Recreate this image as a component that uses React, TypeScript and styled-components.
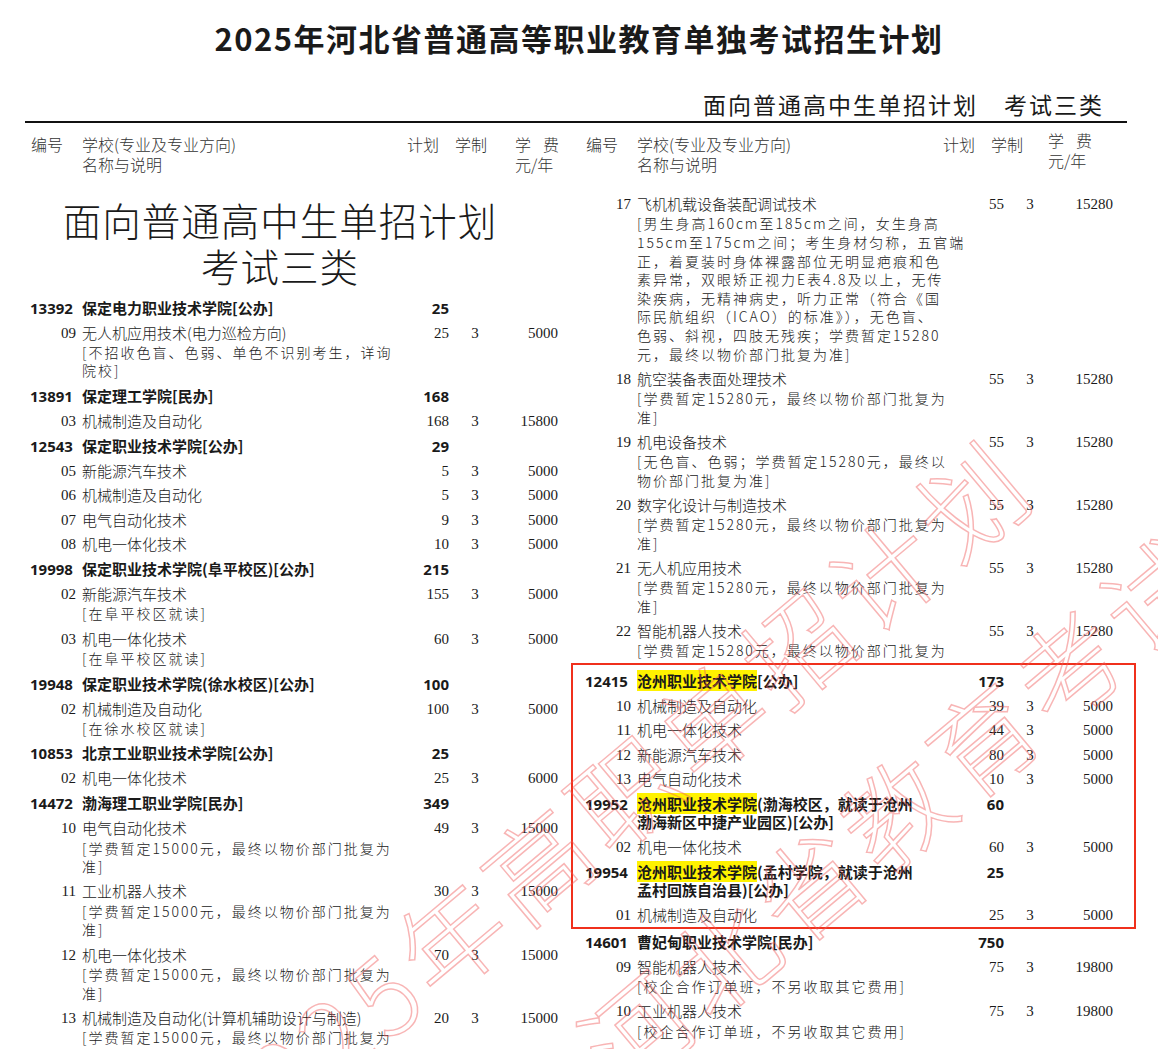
import React from "react";
import styled, { createGlobalStyle } from "styled-components";

const Global = createGlobalStyle`
  html, body { margin: 0; padding: 0; background: #fff; }
  body { width: 1158px; height: 1049px; overflow: hidden; font-family: "Noto Sans CJK SC", "Noto Sans", sans-serif; color: #1a1a1a; }
`;

const Page = styled.div`
  position: relative;
  width: 1158px;
  height: 1049px;
  overflow: hidden;
`;
const Title = styled.h1`
  margin: 0;
  padding-top: 16px;
  height: 44px;
  text-align: center;
  font-size: 31px;
  font-weight: 700;
  line-height: 44px;
  letter-spacing: 1.5px;
`;
const Sub = styled.div`
  margin: 28px 54px 0 0;
  text-align: right;
  font-size: 23px;
  line-height: 32px;
  letter-spacing: 2px;
  span { margin-left: 26px; }
`;
const Rule = styled.div`
  margin: 1px 31px 0 25px;
  height: 2px;
  background: #111;
`;
const Columns = styled.div`
  display: grid;
  grid-template-columns: 555px 552px;
  margin-left: 25px;
`;
const Col = styled.div``;
const Head = styled.div<{ $right?: boolean }>`
  display: grid;
  grid-template-columns: ${p => (p.$right ? "57px 306px 48px 57px 60px" : "57px 325px 48px 60px 60px")};
  padding-top: 11px;
  height: 58px;
  font-size: 16px;
  font-weight: 300;
  line-height: 20px;
  color: #333;
  white-space: nowrap;
  & > div:first-child { padding-left: 6px; }
`;
const FeeHead = styled.div<{ $up?: boolean }>`
  margin-top: ${p => (p.$up ? "-4px" : "0")};
  b { font-weight: 300; margin-right: 12px; }
`;
const BigHead = styled.div`
  text-align: center;
  font-size: 38.5px;
  font-weight: 300;
  line-height: 46px;
  padding: 4px 45px 0 0;
  height: 99px;
  letter-spacing: 1px;
  white-space: nowrap;
`;
const grid = `
  display: grid;
  grid-template-columns: 57px 318px 49px 52px 57px;
`;
const SchoolRow = styled.div`
  ${grid}
  font-weight: 700;
  font-size: 15px;
  line-height: 18px;
  padding: 3.5px 0 4px;
  & > .c { padding-left: 5px; font-family: "Noto Sans", sans-serif; }
  & > .p { text-align: right; font-family: "Noto Sans", sans-serif; }
`;
const Hl = styled.mark`
  background: #fff200;
  color: inherit;
`;
const ItemRow = styled.div`
  ${grid}
  height: 24.4px;
  line-height: 24px;
  font-size: 15px;
  font-weight: 300;
  & > .c { text-align: right; padding-right: 6px; font-family: "Liberation Serif", serif; font-size: 15px; }
  & > .p, & > .f { text-align: right; font-family: "Liberation Serif", serif; }
  & > .y { text-align: center; font-family: "Liberation Serif", serif; }
  & > .n { white-space: nowrap; }
`;
const Note = styled.div`
  padding-left: 57px;
  font-size: 14px;
  line-height: 18.6px;
  letter-spacing: 2px;
  font-weight: 300;
  color: #222;
  white-space: nowrap;
  margin-top: -2px;
  margin-bottom: 3.5px;
`;
const RedBox = styled.div`
  border: 2px solid #f0301c;
  margin: 0 -4px 0 -9px;
  padding: 3px 4px 0 7px;
`;
const Watermark = styled.div`
  position: absolute;
  pointer-events: none;
  left: 150px;
  top: 1060px;
  transform: rotate(-40deg);
  transform-origin: left top;
  font-size: 105px;
  font-weight: 300;
  color: transparent;
  -webkit-text-stroke: 1.5px rgba(240, 90, 90, 0.45);
  white-space: nowrap;
  line-height: 190px;
  letter-spacing: 8px;
`;

type R =
  | { t: "s"; c: string; n: React.ReactNode; p: string }
  | { t: "i"; c: string; n: string; p: string; y?: string; f: string }
  | { t: "n"; l: string[] }
  | { t: "box"; rows: R[] };

const render = (rows: R[]) =>
  rows.map((r, i) => {
    if (r.t === "s")
      return (
        <SchoolRow key={i}>
          <div className="c">{r.c}</div>
          <div>{r.n}</div>
          <div className="p">{r.p}</div>
        </SchoolRow>
      );
    if (r.t === "i")
      return (
        <ItemRow key={i}>
          <div className="c">{r.c}</div>
          <div className="n">{r.n}</div>
          <div className="p">{r.p}</div>
          <div className="y">{r.y ?? "3"}</div>
          <div className="f">{r.f}</div>
        </ItemRow>
      );
    if (r.t === "n")
      return (
        <Note key={i}>
          {r.l.map((s, j) => (
            <div key={j}>{s}</div>
          ))}
        </Note>
      );
    return <RedBox key={i}>{render(r.rows)}</RedBox>;
  });

const fee15 = ["[学费暂定15000元，最终以物价部门批复为", "准]"];
const fee1528 = ["[学费暂定15280元，最终以物价部门批复为", "准]"];

const left: R[] = [
  { t: "s", c: "13392", n: "保定电力职业技术学院[公办]", p: "25" },
  { t: "i", c: "09", n: "无人机应用技术(电力巡检方向)", p: "25", f: "5000" },
  { t: "n", l: ["[不招收色盲、色弱、单色不识别考生，详询", "院校]"] },
  { t: "s", c: "13891", n: "保定理工学院[民办]", p: "168" },
  { t: "i", c: "03", n: "机械制造及自动化", p: "168", f: "15800" },
  { t: "s", c: "12543", n: "保定职业技术学院[公办]", p: "29" },
  { t: "i", c: "05", n: "新能源汽车技术", p: "5", f: "5000" },
  { t: "i", c: "06", n: "机械制造及自动化", p: "5", f: "5000" },
  { t: "i", c: "07", n: "电气自动化技术", p: "9", f: "5000" },
  { t: "i", c: "08", n: "机电一体化技术", p: "10", f: "5000" },
  { t: "s", c: "19998", n: "保定职业技术学院(阜平校区)[公办]", p: "215" },
  { t: "i", c: "02", n: "新能源汽车技术", p: "155", f: "5000" },
  { t: "n", l: ["[在阜平校区就读]"] },
  { t: "i", c: "03", n: "机电一体化技术", p: "60", f: "5000" },
  { t: "n", l: ["[在阜平校区就读]"] },
  { t: "s", c: "19948", n: "保定职业技术学院(徐水校区)[公办]", p: "100" },
  { t: "i", c: "02", n: "机械制造及自动化", p: "100", f: "5000" },
  { t: "n", l: ["[在徐水校区就读]"] },
  { t: "s", c: "10853", n: "北京工业职业技术学院[公办]", p: "25" },
  { t: "i", c: "02", n: "机电一体化技术", p: "25", f: "6000" },
  { t: "s", c: "14472", n: "渤海理工职业学院[民办]", p: "349" },
  { t: "i", c: "10", n: "电气自动化技术", p: "49", f: "15000" },
  { t: "n", l: fee15 },
  { t: "i", c: "11", n: "工业机器人技术", p: "30", f: "15000" },
  { t: "n", l: fee15 },
  { t: "i", c: "12", n: "机电一体化技术", p: "70", f: "15000" },
  { t: "n", l: fee15 },
  { t: "i", c: "13", n: "机械制造及自动化(计算机辅助设计与制造)", p: "20", f: "15000" },
  { t: "n", l: fee15 },
];

const right: R[] = [
  { t: "i", c: "17", n: "飞机机载设备装配调试技术", p: "55", f: "15280" },
  {
    t: "n",
    l: [
      "[男生身高160cm至185cm之间，女生身高",
      "155cm至175cm之间；考生身材匀称，五官端",
      "正，着夏装时身体裸露部位无明显疤痕和色",
      "素异常，双眼矫正视力E表4.8及以上，无传",
      "染疾病，无精神病史，听力正常（符合《国",
      "际民航组织（ICAO）的标准》），无色盲、",
      "色弱、斜视，四肢无残疾；学费暂定15280",
      "元，最终以物价部门批复为准]",
    ],
  },
  { t: "i", c: "18", n: "航空装备表面处理技术", p: "55", f: "15280" },
  { t: "n", l: fee1528 },
  { t: "i", c: "19", n: "机电设备技术", p: "55", f: "15280" },
  { t: "n", l: ["[无色盲、色弱；学费暂定15280元，最终以", "物价部门批复为准]"] },
  { t: "i", c: "20", n: "数字化设计与制造技术", p: "55", f: "15280" },
  { t: "n", l: fee1528 },
  { t: "i", c: "21", n: "无人机应用技术", p: "55", f: "15280" },
  { t: "n", l: fee1528 },
  { t: "i", c: "22", n: "智能机器人技术", p: "55", f: "15280" },
  { t: "n", l: ["[学费暂定15280元，最终以物价部门批复为"] },
  {
    t: "box",
    rows: [
      { t: "s", c: "12415", n: <><Hl>沧州职业技术学院</Hl>[公办]</>, p: "173" },
      { t: "i", c: "10", n: "机械制造及自动化", p: "39", f: "5000" },
      { t: "i", c: "11", n: "机电一体化技术", p: "44", f: "5000" },
      { t: "i", c: "12", n: "新能源汽车技术", p: "80", f: "5000" },
      { t: "i", c: "13", n: "电气自动化技术", p: "10", f: "5000" },
      { t: "s", c: "19952", n: <><Hl>沧州职业技术学院</Hl>(渤海校区，就读于沧州<br />渤海新区中捷产业园区)[公办]</>, p: "60" },
      { t: "i", c: "02", n: "机电一体化技术", p: "60", f: "5000" },
      { t: "s", c: "19954", n: <><Hl>沧州职业技术学院</Hl>(孟村学院，就读于沧州<br />孟村回族自治县)[公办]</>, p: "25" },
      { t: "i", c: "01", n: "机械制造及自动化", p: "25", f: "5000" },
    ],
  },
  { t: "s", c: "14601", n: "曹妃甸职业技术学院[民办]", p: "750" },
  { t: "i", c: "09", n: "智能机器人技术", p: "75", f: "19800" },
  { t: "n", l: ["[校企合作订单班，不另收取其它费用]"] },
  { t: "i", c: "10", n: "工业机器人技术", p: "75", f: "19800" },
  { t: "n", l: ["[校企合作订单班，不另收取其它费用]"] },
  { t: "i", c: "11", n: "智能机电技术", p: "75", f: "17800" },
];

const HeadCells = ({ right: r }: { right?: boolean }) => (
  <Head $right={r}>
    <div>编号</div>
    <div>学校(专业及专业方向)<br />名称与说明</div>
    <div>计划</div>
    <div>学制</div>
    <FeeHead $up={r}><b>学</b>费<br />元/年</FeeHead>
  </Head>
);

export default function App() {
  return (
    <Page>
      <Global />
      <Title>2025年河北省普通高等职业教育单独考试招生计划</Title>
      <Sub>面向普通高中生单招计划<span>考试三类</span></Sub>
      <Rule />
      <Columns>
        <Col>
          <HeadCells />
          <BigHead>面向普通高中生单招计划<br />考试三类</BigHead>
          {render(left)}
        </Col>
        <Col>
          <HeadCells right />
          <div style={{ marginTop: 0 }}>{render(right)}</div>
        </Col>
      </Columns>
      <Watermark>2025年高职单招计划<br />　　　河北省教育考试院</Watermark>
    </Page>
  );
}
